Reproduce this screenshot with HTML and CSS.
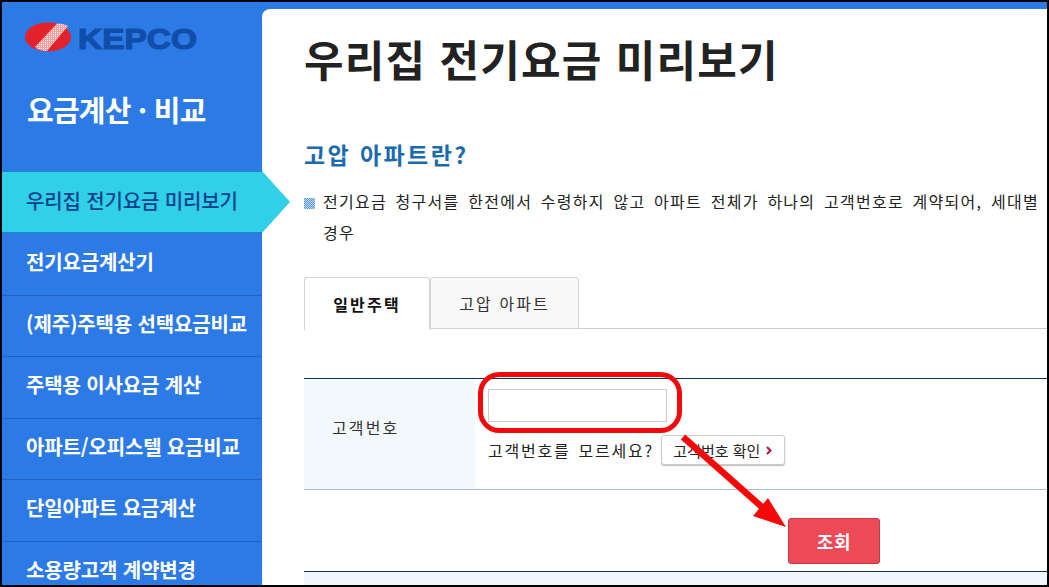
FILE: index.html
```html
<!DOCTYPE html>
<html lang="ko">
<head>
<meta charset="utf-8">
<title>우리집 전기요금 미리보기</title>
<link rel="stylesheet" href="styles.css">
</head>
<body>
<div class="frame">
  <aside class="sidebar">
    <div class="logo">
      <svg width="176" height="40" viewBox="0 0 176 40">
        <defs>
          <pattern id="dots" width="2" height="2" patternUnits="userSpaceOnUse"><rect width="2" height="2" fill="#ff9a9a"/><rect width="1" height="1" fill="#fff"/></pattern>
        </defs>
        <ellipse cx="23" cy="15" rx="23" ry="14.5" fill="#e4222c"/>
        <path d="M10 25 L32 1.5 Q40 1.5 43 4 L22 29 Q14 29 10 25Z" fill="url(#dots)"/>
        <text x="53" y="27" class="logo-text" textLength="119" lengthAdjust="spacingAndGlyphs">KEPCO</text>
      </svg>
    </div>
    <h2 class="brand">요금계산 · 비교</h2>
    <nav class="menu">
      <a class="item active">우리집 전기요금 미리보기</a>
      <a class="item">전기요금계산기</a>
      <a class="item">(제주)주택용 선택요금비교</a>
      <a class="item">주택용 이사요금 계산</a>
      <a class="item">아파트/오피스텔 요금비교</a>
      <a class="item">단일아파트 요금계산</a>
      <a class="item">소용량고객 계약변경</a>
    </nav>
  </aside>
  <main class="main">
    <h1 class="title">우리집 전기요금 미리보기</h1>
    <h3 class="subtitle">고압 아파트란?</h3>
    <div class="note">
      <span class="bullet"></span>
      <p>전기요금 청구서를 한전에서 수령하지 않고 아파트 전체가 하나의 고객번호로 계약되어, 세대별<br>경우</p>
    </div>
    <div class="tabs">
      <div class="tab on">일반주택</div>
      <div class="tab">고압 아파트</div>
    </div>
    <div class="form-row">
      <div class="label">고객번호</div>
      <div class="field">
        <div class="input"></div>
        <div class="help"><span>고객번호를 모르세요?</span><span class="check">고객번호 확인<svg class="chev" width="6" height="9" viewBox="0 0 6 9"><path d="M1 1 L4.5 4.5 L1 8" fill="none" stroke="#b0103c" stroke-width="2"/></svg></span></div>
      </div>
    </div>
    <div class="actions"><span class="btn">조회</span></div>
    <div class="next"></div>
  </main>
  <svg class="overlay" width="1049" height="587" viewBox="0 0 1049 587">
    <rect x="480.5" y="374.5" width="199" height="56" rx="19" fill="none" stroke="#f20a0a" stroke-width="5"/>
    <path d="M683 437 L762 507" stroke="#f40808" stroke-width="6.5" fill="none"/>
    <path d="M753 516 L768 498 L786 527Z" fill="#f40808"/>
  </svg>
</div>
</body>
</html>
```

FILE: styles.css
```css
* { box-sizing: border-box; }
html, body { margin: 0; padding: 0; }
body { width: 1049px; height: 587px; overflow: hidden; background: #000; font-family: "Noto Sans CJK KR", "Noto Sans", sans-serif; color: #111; }
.frame { position: relative; width: 1049px; height: 587px; border: 2px solid #000; background: #2c7ae6; display: flex; overflow: hidden; }
.sidebar { width: 260px; flex: none; background: #2c7ae6; }
.logo { height: 70px; padding: 20px 0 0 23px; }
.logo-text { font-family: "Liberation Sans", sans-serif; font-weight: 700; font-size: 29px; fill: #114ea9; stroke: #114ea9; stroke-width: 1.2px; }
.brand { margin: 0; height: 99px; padding: 15px 0 0 25px; font-size: 29px; line-height: 44px; font-weight: 700; letter-spacing: -0.8px; color: #fff; white-space: nowrap; }
.menu { display: flex; flex-direction: column; }
.item { display: flex; align-items: center; height: 61.5px; padding: 0 0 5px 24px; font-size: 20px; font-weight: 700; letter-spacing: -0.15px; color: #fff; border-top: 1px solid #1f62c4; white-space: nowrap; }
.item:nth-child(2) { border-top: 0; }
.item.active { position: relative; z-index: 2; height: 62px; padding-bottom: 3px; background: #2fd0e8; color: #0a3f8c; font-weight: 500; border-top: 1px solid #1f86c8; border-bottom: 1px solid #1f86c8; }
.item.active::after { content: ""; position: absolute; left: 260px; top: -1px; border-style: solid; border-width: 31px 0 31px 28px; border-color: transparent transparent transparent #2fd0e8; }
.main { position: relative; flex: 1; margin-top: 7px; background: #fff; border-top-left-radius: 8px; padding: 0 0 0 42px; overflow: hidden; min-width: 0; }
.title { margin: 0; height: 104px; padding-top: 17px; font-size: 43px; line-height: 64px; font-weight: 700; letter-spacing: 1.2px; color: #222; white-space: nowrap; }
.subtitle { margin: 0; padding-top: 23px; height: 66px; font-size: 23px; line-height: 36px; font-weight: 700; color: #1a6ab0; letter-spacing: 2.4px; }
.note { display: flex; gap: 8px; height: 99px; }
.bullet { flex: none; width: 11px; height: 11px; margin-top: 19px; background: repeating-conic-gradient(#5b9ad6 0 25%, #bcd8f0 0 50%) 0 0 / 2px 2px; }
.note p { margin: 0; font-size: 16px; line-height: 31px; letter-spacing: 1.25px; word-spacing: 3px; color: #222; white-space: nowrap; padding-top: 7px; }
.tabs { display: flex; height: 52px; border-bottom: 1px solid #ccc; margin-top: -1px; }
.tab { height: 52px; width: 149px; display: flex; align-items: center; justify-content: center; font-size: 16px; letter-spacing: 2.1px; color: #333; background: #f8f8f8; border: 1px solid #d4d4d4; border-radius: 3px 3px 0 0; }
.tab.on { width: 126px; height: 53px; background: #fff; border-bottom: 0; font-weight: 700; color: #111; letter-spacing: 2.2px; }
.form-row { display: flex; margin-top: 49px; height: 112px; border-top: 1px solid #0d2f5e; border-bottom: 1px solid #aebbc6; }
.label { width: 171px; flex: none; background: #f3f8fd; padding: 33px 0 0 28px; font-size: 16px; line-height: 30px; letter-spacing: 2.1px; color: #333; }
.field { padding: 10px 0 0 13px; }
.input { width: 179px; height: 33px; border: 1px solid #ccc; background: #fff; }
.help { display: flex; align-items: center; gap: 7px; margin-top: 13px; font-size: 16px; letter-spacing: 1.75px; word-spacing: 2px; color: #222; white-space: nowrap; }
.check { display: inline-flex; align-items: center; gap: 6px; height: 30px; width: 124px; justify-content: center; border: 1px solid #ccc; border-radius: 3px; box-shadow: 0 1px 1px #bbb; font-size: 15px; letter-spacing: 0; word-spacing: 0; background: #fff; }
.chev { flex: none; }
.actions { height: 81px; padding: 28px 0 0 484px; }
.btn { display: flex; align-items: center; justify-content: center; width: 92px; height: 46px; background: #ec4a56; border: 1px solid #c63a48; border-radius: 3px; color: #fff; font-size: 18px; font-weight: 700; letter-spacing: 0.8px; }
.next { height: 30px; border-top: 1px solid #0d2f5e; background: #f0f6fc; }
.overlay { position: absolute; left: -2px; top: -2px; pointer-events: none; }
```
